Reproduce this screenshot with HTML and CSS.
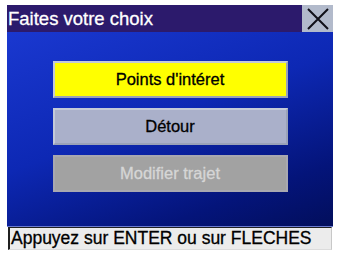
FILE: index.html
```html
<!DOCTYPE html>
<html>
<head>
<meta charset="utf-8">
<link rel="stylesheet" href="styles.css">
</head>
<body>
<div class="screen">
  <div class="titlebar">
    <div class="title">Faites votre choix</div>
    <div class="close">
      <svg width="24" height="24" viewBox="0 0 24 24"><path d="M2 2 L22 22 M22 2 L2 22" stroke="#101018" stroke-width="2" fill="none"/></svg>
    </div>
  </div>
  <div class="main">
    <div class="btn btn-active">Points d'intéret</div>
    <div class="btn btn-normal">Détour</div>
    <div class="btn btn-disabled">Modifier trajet</div>
  </div>
  <div class="status">Appuyez sur ENTER ou sur FLECHES</div>
</div>
</body>
</html>
```
FILE: styles.css
```css
html, body {
  margin: 0;
  padding: 0;
  background: #ffffff;
}
body {
  width: 340px;
  height: 256px;
  overflow: hidden;
  font-family: "Liberation Sans", Arial, sans-serif;
}
.screen {
  margin: 5px 0 0 7px;
  width: 326px;
  display: flex;
  flex-direction: column;
}
.titlebar {
  height: 27px;
  display: flex;
  background: #2c1a6c;
}
.title {
  flex: 1;
  color: #ffffff;
  font-size: 18.5px;
  line-height: 27px;
  padding-left: 1px;
  -webkit-text-stroke: 0.3px #ffffff;
}
.close {
  width: 31px;
  background: #b2bacb;
  display: flex;
  align-items: center;
  justify-content: center;
}
.main {
  height: 195px;
  background: linear-gradient(160deg, #1a38d0 0%, #0d28b4 45%, #04147a 80%, #020e5c 100%);
  display: flex;
  flex-direction: column;
  align-items: center;
  gap: 10px;
  padding-top: 29px;
  box-sizing: border-box;
  border-bottom: 1px solid #6a7ad0;
}
.btn {
  width: 235px;
  height: 37px;
  box-sizing: border-box;
  display: flex;
  align-items: center;
  justify-content: center;
  font-size: 16.5px;
  border: 2px solid #c4cad8;
  border-right-color: #9aa2b8;
  border-bottom-color: #9aa2b8;
  -webkit-text-stroke: 0.3px currentColor;
}
.btn-active {
  background: #ffff00;
  color: #000000;
}
.btn-normal {
  background: #aab0ca;
  color: #000000;
}
.btn-disabled {
  background: #a2a2a2;
  color: #d6d6d6;
  border-color: #a8a8b0;
}
.status {
  margin-left: 1px;
  width: 324px;
  height: 23px;
  box-sizing: border-box;
  background: #ececec;
  border-top: 1px solid #202020;
  border-left: 2px solid #202020;
  border-right: 1px solid #c8c8c8;
  border-bottom: 1px solid #dcdcdc;
  font-size: 17.5px;
  line-height: 21px;
  padding-left: 1px;
  color: #000000;
  -webkit-text-stroke: 0.3px #000000;
}
```
